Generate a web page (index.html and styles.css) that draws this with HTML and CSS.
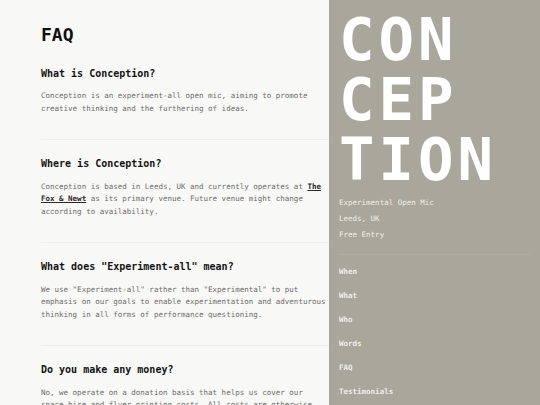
FILE: index.html
```html
<!DOCTYPE html>
<html lang="en">
<head>
<meta charset="utf-8">
<title>Conception — FAQ</title>
<link rel="stylesheet" href="styles.css">
</head>
<body>
<div class="layout">
  <main class="main">
    <h1 class="page-title">FAQ</h1>
    <section class="faq">
      <h2 class="faq-q">What is Conception?</h2>
      <p class="faq-a">Conception is an experiment-all open mic, aiming to promote creative thinking and the furthering of ideas.</p>
    </section>
    <section class="faq">
      <h2 class="faq-q">Where is Conception?</h2>
      <p class="faq-a">Conception is based in Leeds, UK and currently operates at <a class="venue" href="#">The Fox &amp; Newt</a> as its primary venue. Future venue might change according to availability.</p>
    </section>
    <section class="faq">
      <h2 class="faq-q">What does "Experiment-all" mean?</h2>
      <p class="faq-a">We use "Experiment-all" rather than "Experimental" to put emphasis on our goals to enable experimentation and adventurous thinking in all forms of performance questioning.</p>
    </section>
    <section class="faq">
      <h2 class="faq-q">Do you make any money?</h2>
      <p class="faq-a">No, we operate on a donation basis that helps us cover our space hire and flyer printing costs. All costs are otherwise covered by the organisers themselves.</p>
    </section>
  </main>
  <aside class="side">
    <div class="brand">CON<br>CEP<br>TION</div>
    <ul class="info">
      <li>Experimental Open Mic</li>
      <li>Leeds, UK</li>
      <li>Free Entry</li>
    </ul>
    <nav class="nav">
      <a href="#">When</a>
      <a href="#">What</a>
      <a href="#">Who</a>
      <a href="#">Words</a>
      <a href="#">FAQ</a>
      <a href="#">Testimonials</a>
    </nav>
  </aside>
</div>
</body>
</html>
```

FILE: styles.css
```css
html, body {
  margin: 0;
  padding: 0;
}
body {
  background: #f8f8f6;
  font-family: "DejaVu Sans Mono", "Liberation Mono", monospace;
  overflow: hidden;
}
.layout {
  display: grid;
  grid-template-columns: 329px 211px;
  min-height: 100vh;
}
.main {
  padding: 26px 0 0 41px;
}
.page-title {
  margin: 0 0 23.5px;
  font-size: 18px;
  line-height: 18px;
  font-weight: bold;
  color: #111;
}
.faq {
  padding-bottom: 24px;
  border-bottom: 1px solid #eeeeeb;
  margin-bottom: 18px;
}
.faq-q {
  margin: 0 0 10.5px;
  font-size: 10px;
  line-height: 12px;
  font-weight: bold;
  color: #141414;
}
.faq-a {
  margin: 0;
  font-size: 7.5px;
  line-height: 12.5px;
  color: #6c6c6a;
}
.venue {
  color: #2a2a2a;
  font-weight: bold;
  text-decoration: underline;
}
.side {
  background: #a9a69b;
  padding: 10px 0 0 10px;
  color: #f0efe9;
}
.brand {
  font-size: 59px;
  line-height: 60px;
  font-weight: bold;
  letter-spacing: 4px;
  color: #ffffff;
  margin-bottom: 4.5px;
}
.info {
  list-style: none;
  margin: 0 10px 0 0;
  padding: 0 0 11.5px;
  border-bottom: 1px solid #afaca2;
  font-size: 7.5px;
  line-height: 16px;
}
.nav {
  display: flex;
  flex-direction: column;
  padding-top: 5px;
}
.nav a {
  font-size: 7.5px;
  line-height: 24px;
  color: #efeee8;
  text-decoration: none;
  font-weight: bold;
}
```
